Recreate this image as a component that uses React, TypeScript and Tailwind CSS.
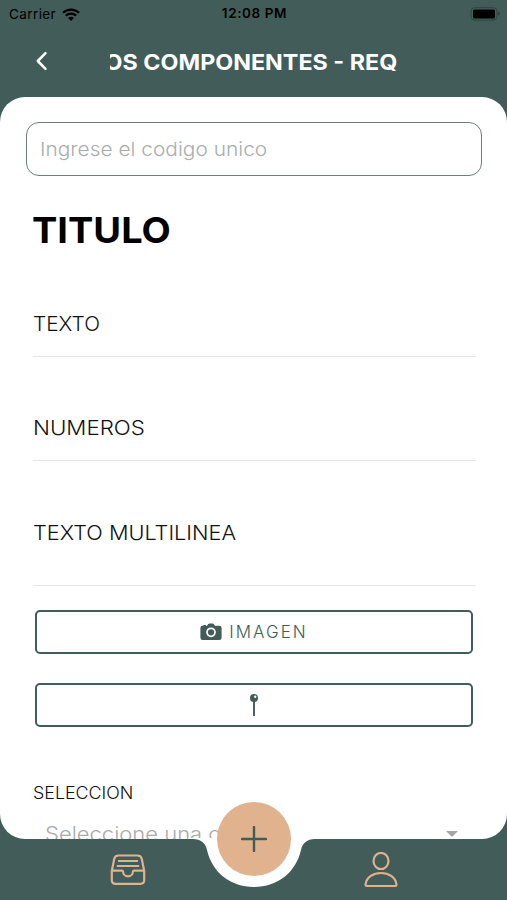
import type { ReactNode } from "react";

function StatusBar() {
  return (
    <div className="flex h-7 items-center justify-between pl-[9px] pr-[7px] text-[13px] text-black">
      <div className="flex w-[100px] items-center gap-[6px]">
        <span className="text-[13.5px] tracking-[0.4px]">Carrier</span>
        <svg width="18" height="13" viewBox="0 0 18 13">
          <path
            d="M1 4.8a11.5 11.5 0 0 1 16 0M3.8 7.8a7.5 7.5 0 0 1 10.4 0"
            fill="none"
            stroke="currentColor"
            strokeWidth="2.2"
          />
          <path d="M9 13 6.1 10.1a4.2 4.2 0 0 1 5.8 0z" fill="currentColor" />
        </svg>
      </div>
      <span className="pb-px text-[13.5px] font-semibold tracking-[0.6px]">12:08 PM</span>
      <div className="flex w-[100px] justify-end">
        <svg width="30" height="14" viewBox="0 0 30 14">
          <rect x="1" y=".7" width="26" height="12.4" rx="3.5" fill="none" stroke="#30433f" />
          <rect x="3" y="2.6" width="22" height="8.8" rx="1.5" />
          <path d="M28.4 4.8v4a2.2 2.2 0 0 0 0-4" fill="#26332f" />
        </svg>
      </div>
    </div>
  );
}

function Header() {
  return (
    <header className="flex h-[69px] items-center">
      <button className="ml-[35px] flex w-[75px] pb-[3px]" aria-label="Volver">
        <svg width="13" height="20" viewBox="0 0 13 20" className="text-white">
          <path
            d="M10.5 2.2 2.8 10l7.7 7.8"
            fill="none"
            stroke="currentColor"
            strokeWidth="2.5"
            strokeLinecap="round"
            strokeLinejoin="round"
          />
        </svg>
      </button>
      <div className="flex w-[287px] justify-end overflow-hidden">
        <h1 className="origin-right scale-x-[1.083] whitespace-nowrap text-[21.5px] font-bold text-white">
          TODOS LOS COMPONENTES - REQ
        </h1>
      </div>
    </header>
  );
}

type FieldProps = {
  label: string;
  className: string;
  labelClassName: string;
};

function Field({ label, className, labelClassName }: FieldProps) {
  return (
    <label className={`flex border-b border-[#e6e8e8] ${className}`}>
      <span
        className={`origin-left whitespace-nowrap pt-px text-[20px] font-[350] leading-7 text-[#111] ${labelClassName}`}
      >
        {label}
      </span>
    </label>
  );
}

function OutlineButton({ children }: { children: ReactNode }) {
  return (
    <button className="flex h-11 w-[438px] items-center justify-center gap-[7px] rounded-[5px] border-[2.5px] border-[#425c59] text-[#425c59]">
      {children}
    </button>
  );
}

function CameraIcon() {
  return (
    <svg width="22" height="18" viewBox="0 0 22 18">
      <path
        d="M2.6 2.8h.6q0-.8.8-.8h1.4q.8 0 .8.8h.8L8.3 1q.5-.6 1.3-.6h2.8q.8 0 1.3.6L15 2.8h4.4q2.2 0 2.2 2.2v9.8q0 2.200-2.200 2.200H2.6Q.4 17 .4 14.8V5q0-2.200 2.200-2.200z"
        fill="currentColor"
      />
      <circle cx="11" cy="9.3" r="4" fill="none" stroke="#fff" strokeWidth="1.7" />
    </svg>
  );
}

function PinIcon() {
  return (
    <svg width="10" height="24" viewBox="0 0 10 24">
      <path d="M5 6v17" stroke="currentColor" strokeWidth="1.9" />
      <circle cx="5" cy="5" r="4" fill="currentColor" />
      <circle cx="6.2" cy="3.7" r="1.2" fill="#fff" />
    </svg>
  );
}

function InboxIcon() {
  return (
    <svg width="36" height="32" viewBox="0 0 36 32" fill="none" stroke="currentColor" strokeWidth="2.2">
      <path
        d="M1.8 17 4.2 5Q4.9 1.5 8.4 1.5h19.2q3.5 0 4.2 3.5l2.4 12v9q0 3.8-3.8 3.8H5.6q-3.8 0-3.8-3.8z"
        strokeLinejoin="round"
      />
      <path d="M1.8 16.6H12q1 0 1.1 1.2a4.9 4.6 0 0 0 9.8 0q.1-1.2 1.1-1.2h10.2" />
      <path d="M8 7h20M6.8 12h22.4" />
    </svg>
  );
}

function UserIcon() {
  return (
    <svg width="34" height="36" viewBox="0 0 34 36" fill="none" stroke="currentColor" strokeWidth="2.2">
      <ellipse cx="17" cy="9" rx="7.5" ry="8" />
      <path
        d="M3.2 34h27.6q1.9 0 1.6-1.9C31.3 25.2 24.8 21 17 21S2.7 25.2 1.6 32.1q-.3 1.9 1.6 1.9z"
        strokeLinejoin="round"
      />
    </svg>
  );
}

function TabBar() {
  return (
    <nav className="relative flex h-[61px] justify-between pl-[110px] pr-[109px] text-[#deb28c]">
      <button className="mt-[15px] h-8" aria-label="Formularios">
        <InboxIcon />
      </button>
      <button className="mt-[13px] h-9" aria-label="Perfil">
        <UserIcon />
      </button>
      {/* notch that holds the floating button */}
      <svg
        className="absolute left-[184px] top-[-1px]"
        width="140"
        height="50"
        viewBox="0 0 140 50"
        fill="#fff"
      >
        <path d="M4 0v1h5c8 0 12.5 4 14 11 5 22 23 37 47 37s42-15 47-37c1.5-7 6-11 14-11h5V0z" />
      </svg>
      <button
        className="absolute left-[217px] top-[-37px] flex size-[74px] items-center justify-center rounded-full bg-[#e0b38e] text-[#425c59]"
        aria-label="Agregar"
      >
        <svg width="26" height="26" viewBox="0 0 26 26">
          <path d="M13 1v24M1 13h24" stroke="currentColor" strokeWidth="2.4" strokeLinecap="round" />
        </svg>
      </button>
    </nav>
  );
}

export default function App() {
  return (
    <div className="flex h-[900px] w-[507px] flex-col overflow-hidden bg-[#425c59] font-['Inter','Liberation_Sans',sans-serif]">
      <StatusBar />
      <Header />
      <main className="h-[742px] overflow-hidden rounded-[25px] bg-white">
        <div className="ml-[26px] mt-[25px] flex h-[54px] w-[456px] items-center rounded-[13px] border-[1.5px] border-[#6a807b] pl-[13px]">
          <span className="origin-left scale-x-[1.1] whitespace-nowrap pt-0.5 text-[19px] font-light text-[#a9adac]">
            Ingrese el codigo unico
          </span>
        </div>

        <div className="ml-[33px] mt-[30px] w-[443px]">
          <h2 className="-ml-px h-12 w-fit origin-left scale-x-[1.055] text-[36px] font-bold leading-[48px] text-black">
            TITULO
          </h2>
          <Field label="TEXTO" className="mt-[55px] h-12" labelClassName="scale-x-[1.04]" />
          <Field label="NUMEROS" className="mt-[56px] h-12" labelClassName="scale-x-[1.115]" />
          <Field label="TEXTO MULTILINEA" className="mt-[57px] h-[68px]" labelClassName="scale-x-[1.085]" />
        </div>

        <div className="ml-[35px] mt-6 flex flex-col gap-[29px]">
          <OutlineButton>
            <CameraIcon />
            <span className="pt-0.5 text-[17px] font-[350] tracking-[2px]">IMAGEN</span>
          </OutlineButton>
          <OutlineButton>
            <PinIcon />
          </OutlineButton>
        </div>

        <div className="ml-[33px] mt-[53px]">
          <span className="block w-fit origin-left scale-x-[1.05] text-[17px] font-[350] leading-[26px] text-[#111]">
            SELECCION
          </span>
          <div className="flex h-14 items-center justify-between pl-3 pr-[49px]">
            <span className="origin-left scale-x-[1.1] whitespace-nowrap text-[20px] font-light text-[#aaa]">
              Seleccione una opcion
            </span>
            <span className="border-x-[6px] border-t-[6px] border-x-transparent border-t-[#a5a5a5]" />
          </div>
        </div>
      </main>
      <TabBar />
    </div>
  );
}
